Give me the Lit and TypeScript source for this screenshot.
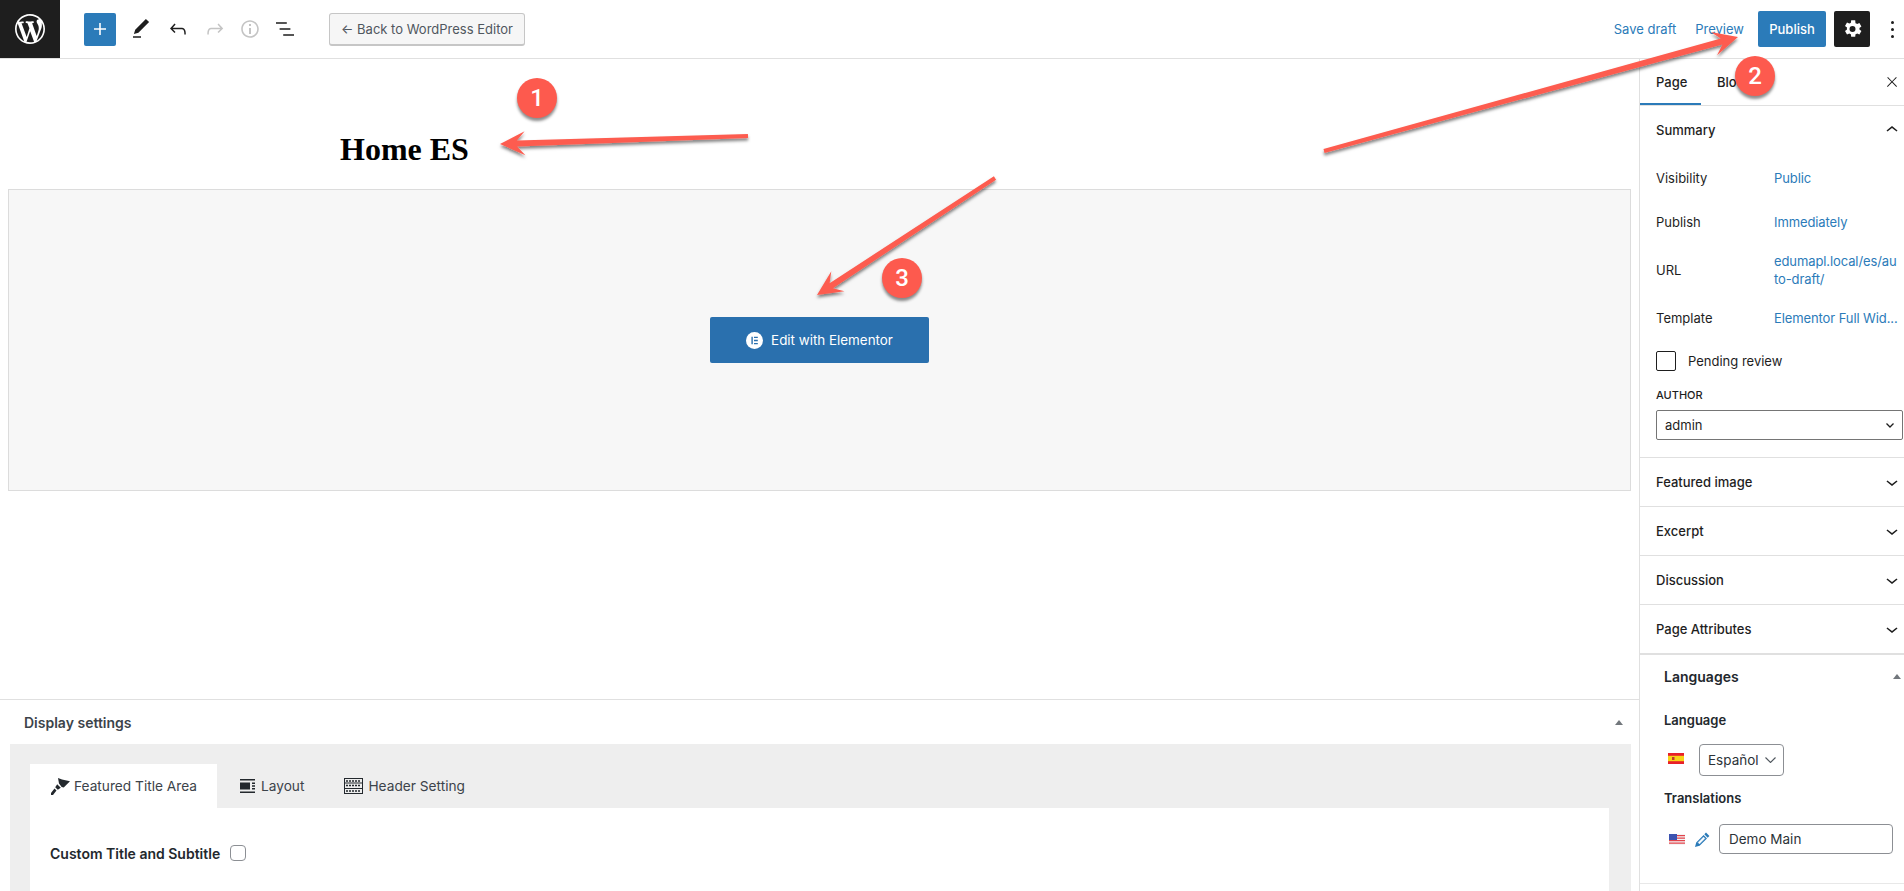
import { LitElement, html, css, svg } from "lit";
import { customElement } from "lit/decorators.js";

const P = {
  wp: "M20 10c0-5.51-4.49-10-10-10C4.48 0 0 4.49 0 10c0 5.52 4.48 10 10 10 5.51 0 10-4.48 10-10zM7.78 15.37L4.37 6.22c.55-.02 1.17-.08 1.17-.08.5-.06.44-1.13-.06-1.11 0 0-1.45.11-2.37.11-.18 0-.37 0-.58-.01C4.12 2.69 6.87 1.11 10 1.11c2.33 0 4.45.87 6.05 2.34-.68-.11-1.65.39-1.65 1.58 0 .74.45 1.36.9 2.1.35.61.55 1.36.55 2.46 0 1.49-1.4 5-1.4 5l-3.03-8.37c.54-.02.82-.17.82-.17.5-.05.44-1.25-.06-1.22 0 0-1.44.12-2.38.12-.87 0-2.33-.12-2.33-.12-.5-.03-.56 1.2-.06 1.22l.92.08 1.26 3.41zM17.41 10c.24-.64.74-1.87.43-4.25.7 1.29 1.05 2.71 1.05 4.25 0 3.29-1.73 6.24-4.4 7.78.97-2.59 1.94-5.2 2.92-7.78zM6.1 18.09C3.12 16.65 1.11 13.53 1.11 10c0-1.3.23-2.48.72-3.59C3.25 10.3 4.67 14.2 6.1 18.09zm4.03-6.63l2.58 6.98c-.86.29-1.76.45-2.71.45-.79 0-1.57-.11-2.29-.33.81-2.38 1.62-4.74 2.42-7.1z",
  plus: "M18 11.2h-5.2V6h-1.6v5.2H6v1.6h5.2V18h1.6v-5.2H18z",
  edit: "M20.1 5.1L16.9 2 6.2 12.7l-1.3 4.4 4.5-1.3L20.1 5.1zM4 20.8h8v-1.5H4v1.5z",
  undo: "M18.3 11.7c-.6-.6-1.4-.9-2.3-.9H6.7l2.9-3.3-1.1-1-4.5 5L8.5 16l1-1-2.7-2.7H16c.5 0 .9.2 1.3.5 1 1 1 3.4 1 4.5v.3h1.5v-.2c0-1.5 0-4.3-1.5-5.7z",
  redo: "M15.6 6.5l-1.1 1 2.9 3.3H8c-.9 0-1.7.3-2.3.9-1.4 1.5-1.4 4.2-1.4 5.6v.2h1.5v-.3c0-1.1 0-3.5 1-4.5.3-.3.7-.5 1.3-.5h9.2L14.5 15l1.1 1.1 4.6-4.6-4.6-5z",
  info: "M12 3.2c-4.8 0-8.8 3.9-8.8 8.8 0 4.8 3.9 8.8 8.8 8.8 4.8 0 8.8-3.9 8.8-8.8 0-4.8-4-8.8-8.8-8.8zm0 16c-4 0-7.2-3.3-7.2-7.2C4.8 8 8 4.8 12 4.8s7.2 3.3 7.2 7.2c0 4-3.2 7.2-7.2 7.2zM11 17h2v-6h-2v6zm0-8h2V7h-2v2z",
  list: "M13.8 5.2H3v1.5h10.8V5.2zm-3.6 12v1.5H21v-1.5H10.2zm7.2-6H6.6v1.5h10.8v-1.5z",
  gear: "M19.5 12c0-.3 0-.6-.1-.9l2-1.5-2-3.5-2.3 1c-.5-.4-1-.7-1.6-.9L15.2 3.3h-4l-.3 2.4c-.6.2-1.1.6-1.6.9l-2.3-1-2 3.5 2 1.5c0 .3-.1.6-.1.9s0 .6.1.9l-2 1.5 2 3.5 2.3-1c.5.4 1 .7 1.6.9l.3 2.5h4l.3-2.5c.6-.2 1.1-.5 1.6-.9l2.3 1 2-3.5-2-1.5c.1-.3.1-.6.1-.9zm-7 3a3 3 0 110-6 3 3 0 010 6z",
  close: "M13 11.8l6.1-6.3-1-1-6.1 6.2-6.1-6.2-1 1 6.1 6.3-6.5 6.7 1 1 6.5-6.6 6.5 6.6 1-1z",
  up: "M6.5 12.4L12 8l5.5 4.4-.9 1.2L12 10l-4.5 3.6-1-1.2z",
  down: "M17.5 11.6L12 16l-5.5-4.4.9-1.2L12 14l4.5-3.6 1 1.2z",
};

const icon = (d: string, size = 24, vb = 24, cls = "") =>
  html`<svg class=${cls} width=${size} height=${size} viewBox="0 0 ${vb} ${vb}" fill="currentColor"><path d=${d}></path></svg>`;

function arrow(x1: number, y1: number, x2: number, y2: number) {
  const l = Math.hypot(x2 - x1, y2 - y1);
  const ux = (x2 - x1) / l, uy = (y2 - y1) / l;
  const nx = -uy, ny = ux;
  const pt = (back: number, side: number) =>
    `${(x2 - ux * back + nx * side).toFixed(1)},${(y2 - uy * back + ny * side).toFixed(1)}`;
  const points = [
    pt(0, 0), pt(25, 12), pt(17, 3), pt(l, 2), pt(l, -2), pt(17, -3), pt(25, -12),
  ].join(" ");
  return svg`<polygon points=${points}></polygon>`;
}

@customElement("app-root")
export class AppRoot extends LitElement {
  static styles = css`
    :host { display: block; position: relative; width: 1904px; height: 891px; overflow: hidden; background: #fff;
      font-family: Inter, "Liberation Sans", sans-serif; font-size: 13px; color: #1e1e1e; }
    * { box-sizing: border-box; }
    svg { display: block; flex: none; }
    .top { height: 59px; border-bottom: 1px solid #e0e0e0; display: flex; align-items: center; }
    .logo { width: 60px; height: 58px; background: #1e1e1e; display: flex; align-items: center; justify-content: center; color: #fff; }
    .tools { display: flex; align-items: center; margin-left: 24px; }
    .add { width: 32px; height: 33px; background: #2b7bb9; color: #fff; border-radius: 2px; display: flex; align-items: center; justify-content: center; }
    .tool { width: 24px; height: 24px; margin-left: 13px; color: #1e1e1e; }
    .tool.off { color: #c4c4c4; }
    .tool.tight { margin-left: 11px; }
    .back { margin-left: 32px; width: 196px; height: 33px; border: 1px solid #c6c6c6; border-bottom-width: 2px; border-radius: 3px; background: #f6f6f6; color: #50575e; display: flex; align-items: center; justify-content: center; font-size: 13px; white-space: nowrap; }
    .right { margin-left: auto; display: flex; align-items: center; }
    .link { color: #2b7bb9; }
    .preview { margin-left: 19px; }
    .publish { margin-left: 14px; width: 68px; height: 36px; background: #2b7bb9; color: #fff; border-radius: 2px; display: flex; align-items: center; justify-content: center; font-weight: 500; }
    .gear { margin-left: 8px; width: 36px; height: 36px; border-radius: 2px; background: #1e1e1e; color: #fff; display: flex; align-items: center; justify-content: center; }
    .more { margin-left: 14px; width: 16px; margin-right: 4px; display: flex; flex-direction: column; align-items: center; gap: 4px; }
    .more i { width: 3px; height: 3px; border-radius: 50%; background: #1e1e1e; display: block; }

    .body { display: flex; height: 832px; overflow: hidden; }
    .main { flex: 1; min-width: 0; display: flex; flex-direction: column; overflow: hidden; }
    .title { flex: none; height: 130px; padding: 70px 0 0 340px; font: 700 32px/40px "Liberation Serif", serif; color: #000; }
    .box { flex: none; margin: 0 8px; height: 302px; background: #f7f7f7; border: 1px solid #dcdcdc; display: flex; justify-content: center; padding-top: 127px; }
    .ele { width: 219px; height: 46px; background: #2a70ae; color: #fff; border-radius: 2px; font-size: 13.4px; display: flex; align-items: center; justify-content: center; gap: 8px; }
    .ele .dot { width: 17px; height: 17px; }
    .meta { flex: 1; min-height: 0; margin-top: 208px; border-top: 1px solid #e0e0e0; display: flex; flex-direction: column; }
    .meta-h { flex: none; height: 44px; padding: 0 16px 0 24px; display: flex; align-items: center; justify-content: space-between; font-weight: 600; font-size: 14px; color: #3c434a; }
    .tri { width: 0; height: 0; border: 4px solid transparent; border-top: 0; border-bottom: 5px solid #72777c; }
    .panel { flex: 1; min-height: 0; margin: 0 8px 0 10px; background: #eee; padding: 20px 22px 0 20px; }
    .tabs { display: flex; height: 44px; color: #3c434a; font-size: 13.7px; }
    .tab { display: flex; align-items: center; gap: 4px; white-space: nowrap; }
    .tab.on { background: #fff; width: 187px; padding-left: 21px; }
    .tab.l { margin-left: 23px; gap: 6px; }
    .tab.h { margin-left: 40px; gap: 5px; }
    .card { background: #fff; height: 100px; padding: 37px 0 0 20px; font-weight: 600; font-size: 14px; color: #23282d; }
    .crow { display: flex; align-items: center; gap: 10px; height: 16px; }
    .crow .cb { width: 16px; height: 16px; border: 1px solid #8c8f94; border-radius: 4px; background: #fff; }

    .side { width: 265px; flex: none; border-left: 1px solid #e0e0e0; }
    .tabs2 { height: 47px; border-bottom: 1px solid #e0e0e0; display: flex; align-items: stretch; }
    .t2 { padding: 0 16px; display: flex; align-items: center; font-weight: 500; }
    .t2.on { width: 61px; box-shadow: inset 0 -2px 0 #2b7bb9; }
    .t2.b { padding-right: 0; }
    .x { margin-left: auto; margin-right: 4px; align-self: center; width: 16px; }
    .sec { border-bottom: 1px solid #e0e0e0; }
    .sec.last { border-bottom: 0; }
    .sec-h { height: 48px; padding-left: 16px; display: flex; align-items: center; justify-content: space-between; font-weight: 500; }
    .sum { height: 352px; }
    .row { display: flex; padding-left: 16px; align-items: center; }
    .row .k { width: 118px; flex: none; }
    .row .v { color: #2b7bb9; line-height: 18px; white-space: nowrap; letter-spacing: -.1px; }
    .r1 { height: 18px; margin-top: 15px; }
    .r2 { height: 18px; margin-top: 26px; }
    .r3 { height: 36px; margin-top: 21px; }
    .r4 { height: 18px; margin-top: 21px; }
    .pending { display: flex; align-items: center; gap: 12px; padding-left: 16px; margin-top: 24px; height: 20px; }
    .pending .c { width: 20px; height: 20px; border: 1px solid #1e1e1e; border-radius: 2px; }
    .cap { padding-left: 16px; margin-top: 17px; font-size: 11px; line-height: 14px; font-weight: 500; }
    .sel { margin: 8px 1px 0 16px; height: 30px; border: 1px solid #757575; border-radius: 2px; display: flex; align-items: center; justify-content: space-between; padding: 0 8px; }
    .lang { border-top: 2px solid #e0e0e0; height: 231px; border-bottom: 1px solid #e8e8e8; padding-left: 24px; }
    .lang-h { height: 43px; display: flex; align-items: center; justify-content: space-between; font-weight: 600; font-size: 14px; padding-right: 3px; color: #23282d; }
    .lbl { font-weight: 600; color: #23282d; line-height: 16px; }
    .l1 { margin-top: 14px; }
    .lrow { display: flex; align-items: center; margin-top: 16px; padding-left: 4px; font-size: 13.5px; }
    .es { margin-top: -4px; }
    .lsel { margin-left: 15px; width: 85px; height: 32px; border: 1px solid #8c8f94; border-radius: 4px; display: flex; align-items: center; padding-left: 8px; gap: 6px; color: #2c3338; }
    .l2 { margin-top: 14px; }
    .trow { display: flex; align-items: center; margin-top: 18px; padding-left: 5px; font-size: 13.5px; }
    .pen { margin-left: 10px; color: #2b7bb9; }
    .tin { margin-left: 9px; width: 174px; height: 30px; border: 1px solid #8c8f94; border-radius: 4px; padding-left: 9px; display: flex; align-items: center; color: #2c3338; }

    .ann { position: absolute; inset: 0; pointer-events: none; }
    .ann polygon { fill: #fd5c4f; }
    .badge { position: absolute; width: 40px; height: 40px; border-radius: 50%; background: #fd5a4e; color: #fff; display: flex; align-items: center; justify-content: center; font: 500 24px Roboto, "Liberation Sans", sans-serif; box-shadow: 0 3px 3px rgba(0,0,0,.45); }
    .b1 { left: 517px; top: 78px; }
    .b2 { left: 1735px; top: 56px; }
    .b3 { left: 882px; top: 258px; }
  `;

  render() {
    return html`
      <div class="top">
        <div class="logo">${icon(P.wp, 30, 20)}</div>
        <div class="tools">
          <div class="add">${icon(P.plus)}</div>
          <div class="tool">${icon(P.edit)}</div>
          <div class="tool">${icon(P.undo)}</div>
          <div class="tool off">${icon(P.redo)}</div>
          <div class="tool off tight">${icon(P.info)}</div>
          <div class="tool tight">${icon(P.list)}</div>
        </div>
        <div class="back">← Back to WordPress Editor</div>
        <div class="right">
          <span class="link">Save draft</span>
          <span class="link preview">Preview</span>
          <div class="publish">Publish</div>
          <div class="gear">${icon(P.gear)}</div>
          <div class="more"><i></i><i></i><i></i></div>
        </div>
      </div>
      <div class="body">
        <div class="main">
          <div class="title">Home ES</div>
          <div class="box">
            <div class="ele">
              <svg class="dot" viewBox="0 0 17 17"><circle cx="8.5" cy="8.5" r="8.5" fill="#fff"></circle><path d="M5.4 4.700h1.400v7.600H5.400zM8 4.700h3.800v1.400H8zM8 7.800h3.800v1.400H8zM8 10.900h3.800v1.400H8z" fill="#2a70ae"></path></svg>
              Edit with Elementor
            </div>
          </div>
          <div class="meta">
            <div class="meta-h"><span>Display settings</span><span class="tri"></span></div>
            <div class="panel">
              <div class="tabs">
                <div class="tab on">
                  <svg width="19" height="17" viewBox="0 0 19 17" fill="#23282d"><path d="M7 0l4 1.500 8 1.800-6.300 6.200-2-.5L8 5.500zM6.200 6.200l3.600 3.600-3 2-2.600-2.600zM3.500 10.500l2 2L2 17H0v-2z"></path></svg>
                  Featured Title Area
                </div>
                <div class="tab l">
                  <svg width="15" height="14" viewBox="0 0 15 14" fill="#23282d"><path d="M0 0h15v1.600H0zM0 12.400h15V14H0zM0 3.500h10v7H0zM12 3.500h3v1.600h-3zM12 6.200h3v1.600h-3zM12 8.900h3v1.600h-3z"></path></svg>
                  Layout
                </div>
                <div class="tab h">
                  <svg width="19" height="16" viewBox="0 0 19 16" fill="none" stroke="#23282d"><rect x=".5" y=".5" width="18" height="15"></rect><path d="M1 5h17M1 10.500h17"></path><path d="M2 3h15M2 7.500h15M2 13h15" stroke-dasharray="2 1" stroke-width="1.400"></path></svg>
                  Header Setting
                </div>
              </div>
              <div class="card"><div class="crow"><span>Custom Title and Subtitle</span><span class="cb"></span></div></div>
            </div>
          </div>
        </div>
        <div class="side">
          <div class="tabs2">
            <div class="t2 on">Page</div>
            <div class="t2 b">Block</div>
            <div class="x">${icon(P.close, 16, 24)}</div>
          </div>
          <div class="sec sum">
            <div class="sec-h">Summary ${icon(P.up)}</div>
            <div class="row r1"><span class="k">Visibility</span><span class="v">Public</span></div>
            <div class="row r2"><span class="k">Publish</span><span class="v">Immediately</span></div>
            <div class="row r3"><span class="k">URL</span><span class="v">edumapl.local/es/au<br />to-draft/</span></div>
            <div class="row r4"><span class="k">Template</span><span class="v">Elementor Full Wid...</span></div>
            <div class="pending"><span class="c"></span>Pending review</div>
            <div class="cap">AUTHOR</div>
            <div class="sel">admin
              <svg width="8" height="5" viewBox="0 0 8 5" fill="none" stroke="#1e1e1e" stroke-width="1.300"><path d="M.5.5L4 4 7.500.5"></path></svg>
            </div>
          </div>
          <div class="sec"><div class="sec-h">Featured image ${icon(P.down)}</div></div>
          <div class="sec"><div class="sec-h">Excerpt ${icon(P.down)}</div></div>
          <div class="sec"><div class="sec-h">Discussion ${icon(P.down)}</div></div>
          <div class="sec last"><div class="sec-h">Page Attributes ${icon(P.down)}</div></div>
          <div class="lang">
            <div class="lang-h"><span>Languages</span><span class="tri"></span></div>
            <div class="lbl l1">Language</div>
            <div class="lrow">
              <svg class="es" width="16" height="11" viewBox="0 0 16 11"><rect width="16" height="11" fill="#e8202a"></rect><rect y="2.800" width="16" height="5.400" fill="#f7d417"></rect><rect x="4" y="4" width="2.500" height="3" fill="#c0392b"></rect></svg>
              <div class="lsel">Español
                <svg width="11" height="6" viewBox="0 0 11 6" fill="none" stroke="#50575e" stroke-width="1.100"><path d="M.5.500l5 5 5-5"></path></svg>
              </div>
            </div>
            <div class="lbl l2">Translations</div>
            <div class="trow">
              <svg width="16" height="11" viewBox="0 0 16 11"><rect width="16" height="11" fill="#f4f4f4"></rect><path d="M0 1h16v1.200H0zM0 3.500h16v1.200H0zM0 6h16v1.200H0zM0 8.500h16v1.200H0z" fill="#e2434b"></path><rect width="8" height="6" fill="#3c53b0"></rect></svg>
              <svg class="pen" width="15" height="15" viewBox="0 0 15 15" fill="currentColor"><path d="M11 .6l3.400 3.400-1.700 1.700-3.400-3.400zM8.600 3l3.400 3.400-7.400 7.400L0 15l1.200-4.600zM3 10.700l1.300 1.300 5.700-5.700L8.700 5z"></path><path d="M3 10.600l5.600-5.600M4.400 12l5.600-5.600" stroke="#fff" stroke-width=".5"></path></svg>
              <div class="tin">Demo Main</div>
            </div>
          </div>
        </div>
      </div>

      <svg class="ann" width="1904" height="891" viewBox="0 0 1904 891">
        <defs><filter id="s" x="-10%" y="-50%" width="120%" height="200%"><feDropShadow dx="0" dy="2.500" stdDeviation="1.500" flood-color="#000" flood-opacity=".5"></feDropShadow></filter></defs>
        <g filter="url(#s)">
          ${arrow(748, 136, 500, 144)}
          ${arrow(1324, 151, 1738, 37)}
          ${arrow(995, 178, 817, 295)}
        </g>
      </svg>
      <div class="badge b1">1</div>
      <div class="badge b2">2</div>
      <div class="badge b3">3</div>
    `;
  }
}
